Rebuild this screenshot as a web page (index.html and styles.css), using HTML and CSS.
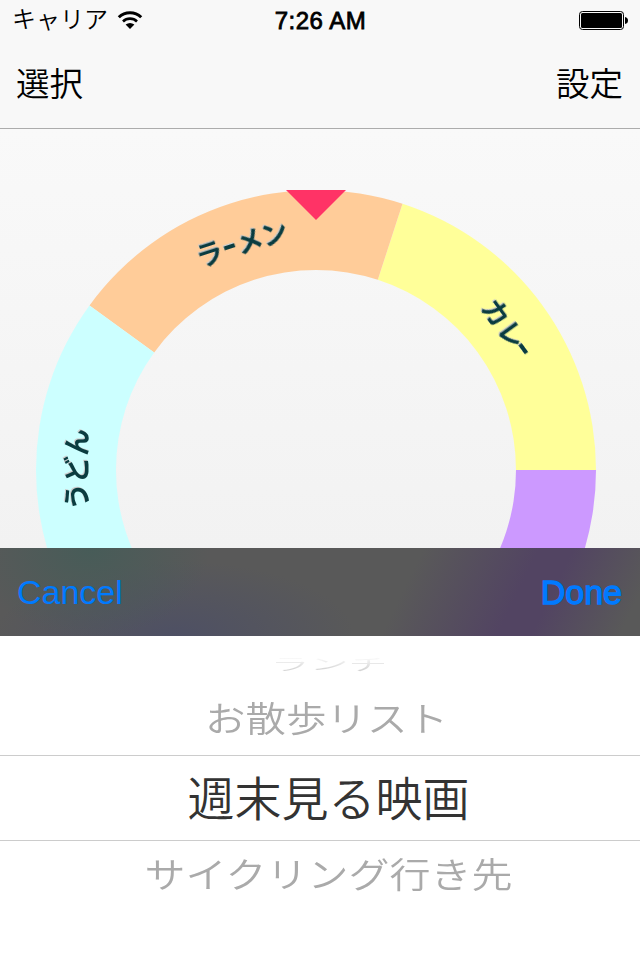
FILE: index.html
```
<!DOCTYPE html>
<html lang="ja">
<head>
    <meta charset="utf-8">
    <title>ルーレット</title>
    <link rel="stylesheet" href="styles.css">
</head>
<body>
    <div class="screen">
        <header class="header">
            <div class="status">
                <div class="status-left">
                    <span class="carrier">キャリア</span>
                    <svg class="wifi" width="26" height="20" viewBox="0 0 26 20">
                        <path d="M1.8 7.3 A16 16 0 0 1 24.2 7.3" fill="none" stroke="#000" stroke-width="3"/>
                        <path d="M6 11.5 A10 10 0 0 1 20 11.5" fill="none" stroke="#000" stroke-width="2.6"/>
                        <path d="M8.6 14.6 Q13 11.2 17.4 14.6 L13 19 Z"/>
                    </svg>
                </div>
                <span class="time">7:26 AM</span>
                <svg class="battery" width="50" height="20" viewBox="0 0 50 20">
                    <rect x="0.5" y="0.5" width="44" height="18" rx="3" fill="none" stroke="#000"/>
                    <rect x="2" y="2" width="41" height="15" rx="1.5"/>
                    <path d="M46 6 Q49 6.5 49 9.5 Q49 12.5 46 13 Z"/>
                </svg>
            </div>
            <nav class="navbar">
                <span>選択</span>
                <span>設定</span>
            </nav>
        </header>

        <main class="stage">
            <svg class="wheel" width="560" height="560" viewBox="-280 -280 560 560">
                <path d="M280 0 A280 280 0 0 0 86.5 -266.3 L61.8 -190.2 A200 200 0 0 1 200 0 Z" fill="#ffff99"/>
                <path d="M86.5 -266.3 A280 280 0 0 0 -226.5 -164.6 L-161.8 -117.6 A200 200 0 0 1 61.8 -190.2 Z" fill="#ffcc99"/>
                <path d="M-226.5 -164.6 A280 280 0 0 0 -226.5 164.6 L-161.8 117.6 A200 200 0 0 1 -161.8 -117.6 Z" fill="#ccffff"/>
                <path d="M-226.5 164.6 A280 280 0 0 0 86.5 266.3 L61.8 190.2 A200 200 0 0 1 -161.8 117.6 Z" fill="#9999ff"/>
                <path d="M86.5 266.3 A280 280 0 0 0 280 0 L200 0 A200 200 0 0 1 61.8 190.2 Z" fill="#cc99ff"/>
                <path d="M-30 -280 H30 L0 -250 Z" fill="#ff3366"/>
                <g class="label">
                    <g transform="rotate(-18) translate(-1 -228)">
                        <text x="-47" y="0">ラ</text>
                        <text x="-38" y="0" transform="scale(.5 1)">ー</text>
                        <text x="-5" y="0">メ</text>
                        <text x="21" y="0">ン</text>
                    </g>
                    <g transform="rotate(54) translate(2 -228)">
                        <text x="-37" y="0">カ</text>
                        <text x="-10" y="0">レ</text>
                        <text x="30" y="0" transform="scale(.5 1)">ー</text>
                    </g>
                    <g transform="rotate(-90) translate(0 -229)">
                        <text x="-40" y="0">う</text>
                        <text x="-13" y="0">ど</text>
                        <text x="14" y="0">ん</text>
                    </g>
                </g>
            </svg>
        </main>

        <div class="toolbar">
            <span class="cancel">Cancel</span>
            <span class="done">Done</span>
        </div>

        <div class="picker">
            <div class="row far"><span>ランチ</span></div>
            <div class="row near above"><span>お散歩リスト</span></div>
            <div class="row selected"><span>週末見る映画</span></div>
            <div class="row near below"><span>サイクリング行き先</span></div>
        </div>
    </div>
</body>
</html>
```
FILE: styles.css
```
body {
    margin: 0;
    font-family: "Liberation Sans", "Noto Sans CJK JP", sans-serif;
    font-weight: 350;
    color: #000;
}
.screen {
    display: flex;
    flex-direction: column;
    width: 640px;
    height: 960px;
    overflow: hidden;
    background: linear-gradient(#f9f9f9 130px, #f2f2f2 548px);
}
.header {
    box-sizing: border-box;
    height: 129px;
    background: #f8f8f8;
    border-bottom: 1px solid #acacac;
}
.status {
    display: grid;
    grid-template-columns: 1fr auto 1fr;
    align-items: center;
    height: 40px;
    padding: 0 11px 0 12px;
}
.status-left {
    display: flex;
    align-items: center;
    gap: 9px;
}
.carrier {
    font-size: 24px;
    line-height: 40px;
}
.time {
    font-size: 24px;
    letter-spacing: 0.5px;
    padding-top: 2px;
    -webkit-text-stroke: 0.8px #000;
}
.battery {
    justify-self: end;
    padding-top: 1px;
}
.navbar {
    display: flex;
    justify-content: space-between;
    align-items: center;
    height: 82px;
    padding: 0 17px 0 16px;
    font-size: 33.5px;
}
.stage {
    height: 419px;
    padding: 61px 0 0 36px;
    box-sizing: border-box;
    overflow: hidden;
}
.wheel {
    display: block;
}
.label {
    font-family: "Noto Sans CJK JP", sans-serif;
    font-size: 27px;
    font-weight: 700;
    fill: #0a3c40;
    filter: drop-shadow(-1px -1px 0 #ccc);
}

/* dark glass: soft spots of the wheel colours on grey */
.toolbar {
    display: flex;
    justify-content: space-between;
    align-items: center;
    box-sizing: border-box;
    height: 88px;
    padding: 0 18px 0 17px;
    background:
        radial-gradient(ellipse 120px 90px at 90px 0, rgba(70, 92, 88, 0.95), rgba(70, 92, 88, 0) 100%),
        radial-gradient(ellipse 180px 75px at 175px 88px, #4e5064, rgba(78, 80, 100, 0) 100%),
        linear-gradient(116deg, rgba(82, 68, 98, 0) 62%, #524462 79%, #524462 84%, rgba(82, 68, 98, 0) 97%),
        #595959;
    color: #007aff;
    font-size: 34px;
}
.done {
    -webkit-text-stroke: 1.3px #007aff;
}

.picker {
    display: flex;
    flex-direction: column;
    height: 324px;
    background: #fff;
}
.row {
    display: flex;
    justify-content: center;
    align-items: center;
    box-sizing: border-box;
    white-space: nowrap;
}
.far {
    height: 48px;
    font-size: 39px;
    color: transparent;
    padding: 6px 0 0 18px;
}
.far span {
    transform: scaleY(0.4);
    background: linear-gradient(#fff 20%, #d4d4d4 80%);
    background-clip: text;
    -webkit-background-clip: text;
}
.near {
    height: 71px;
    color: #aaa;
}
.near span {
    transform: scaleY(0.86);
}
.above {
    font-size: 40.5px;
    padding: 0 0 7px 13px;
}
.below {
    font-size: 41px;
    padding: 0 0 8px 17px;
}
.selected {
    height: 86px;
    border-top: 1px solid #ccc;
    border-bottom: 1px solid #ccc;
    font-size: 47px;
    color: #333;
    padding: 0 0 6px 17px;
}
```
